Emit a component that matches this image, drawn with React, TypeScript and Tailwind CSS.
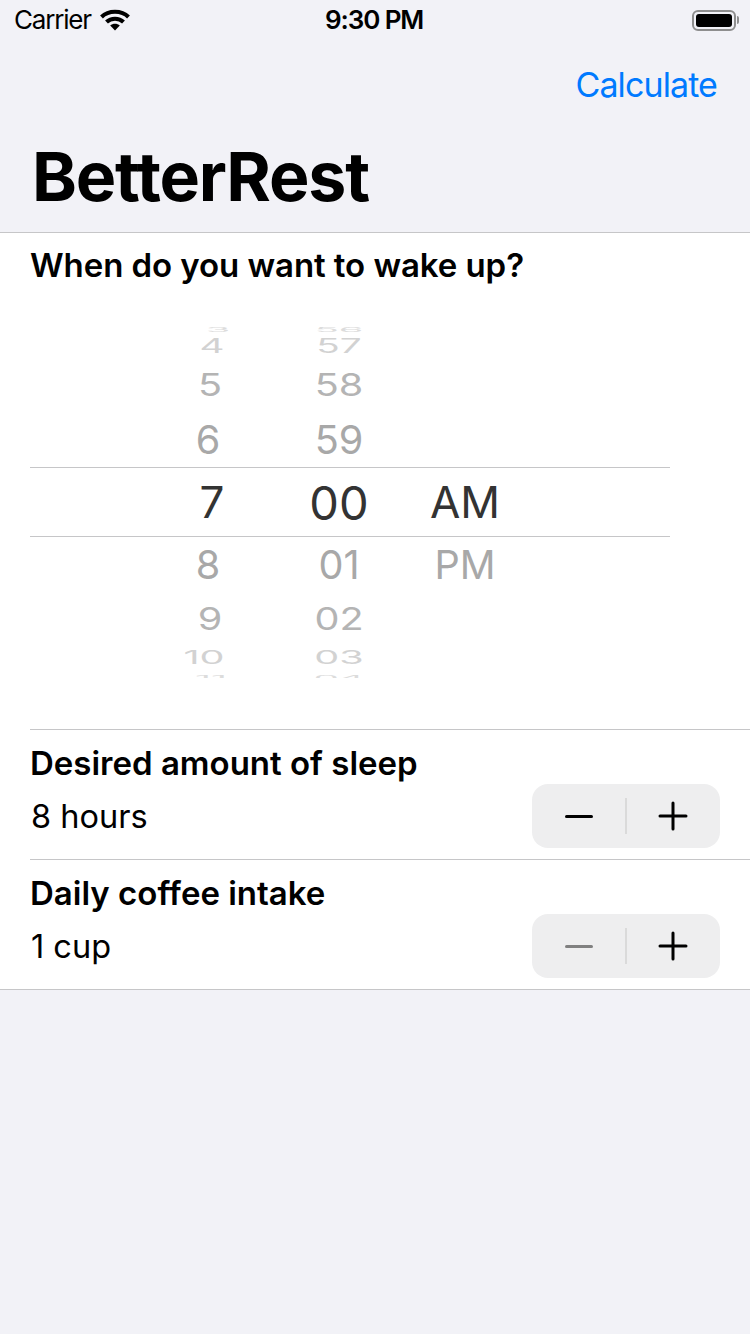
const font = { fontFamily: "Inter, 'Liberation Sans', sans-serif" };

const wheelRows = [
  { h: "h-[9px]", hourBox: "ml-[174px] w-[28px]", hour: "3", minute: "56", ampm: "", text: "text-[#dcdcdc]", scale: "scale-x-[0.9] scale-y-[0.14]" },
  { h: "h-[24px]", hourBox: "ml-[162px] w-[40px]", hour: "4", minute: "57", ampm: "", text: "text-[#d2d2d2]", scale: "scale-x-[0.88] scale-y-[0.44]" },
  { h: "h-[54px]", hourBox: "ml-[158px] w-[44px]", hour: "5", minute: "58", ampm: "", text: "text-[#b4b4b4]", scale: "scale-x-[0.9] scale-y-[0.7]" },
  { h: "h-[55px]", hourBox: "ml-[154px] w-[48px]", hour: "6", minute: "59", ampm: "", text: "text-[#a8a8a8]", scale: "scale-x-[0.9] scale-y-[0.9]" },
  { h: "h-[70px]", hourBox: "ml-[162px] w-[40px]", hour: "7", minute: "00", ampm: "AM", text: "text-[#333333]", scale: "scale-100", selected: true },
  { h: "h-[55px]", hourBox: "ml-[154px] w-[48px]", hour: "8", minute: "01", ampm: "PM", text: "text-[#a8a8a8]", scale: "scale-x-[0.9] scale-y-[0.9]" },
  { h: "h-[54px]", hourBox: "ml-[158px] w-[44px]", hour: "9", minute: "02", ampm: "", text: "text-[#b4b4b4]", scale: "scale-x-[0.9] scale-y-[0.7]" },
  { h: "h-[22px]", hourBox: "ml-[146px] w-[56px]", hour: "10", minute: "03", ampm: "", text: "text-[#d2d2d2]", scale: "scale-x-[0.9] scale-y-[0.42]" },
  { h: "h-[10px] pt-[10px]", hourBox: "ml-[160px] w-[42px]", hour: "11", minute: "04", ampm: "", text: "text-[#dcdcdc]", scale: "scale-x-[0.9] scale-y-[0.14]" },
];

function Stepper({ minusOff }: { minusOff?: boolean }) {
  return (
    <div className="flex h-16 w-[188px] items-center rounded-2xl bg-[#eeeeef] pl-px">
      <div className="flex flex-1 justify-center">
        <div className={`h-[3px] w-7 rounded-full ${minusOff ? "bg-[#808080]" : "bg-black"}`} />
      </div>
      <div className="h-9 w-0.5 bg-[#dadada]" />
      <div className="flex flex-1 justify-center pr-px">
        <svg width="30" height="30" viewBox="0 0 30 30" fill="none" stroke="#000" strokeWidth="3" strokeLinecap="round">
          <path d="M2 15h26M15 2v26" />
        </svg>
      </div>
    </div>
  );
}

function StepRow({ title, value, minusOff }: { title: string; value: string; minusOff?: boolean }) {
  return (
    <div className="ml-[30px] h-[130px] border-t border-[#c6c6c8] pt-[13px] pr-[30px]">
      <div className="text-[33px] leading-10 font-semibold text-black">{title}</div>
      <div className="mt-px flex h-16 items-center justify-between">
        <span className="pt-0.5 pl-px text-[32.5px] text-black">{value}</span>
        <Stepper minusOff={minusOff} />
      </div>
    </div>
  );
}

export default function App() {
  return (
    <div style={font} className="flex h-[1334px] w-[750px] flex-col overflow-hidden bg-[#f2f2f7]">
      {/* status bar */}
      <div className="relative flex h-10 shrink-0 items-center justify-between pr-[11px] pl-[14px]">
        <div className="flex items-center gap-[9px]">
          <span className="text-[26px] leading-none tracking-[-1.2px] text-black">Carrier</span>
          <svg width="30" height="22" viewBox="0 0 30 22" fill="none" stroke="#000" strokeWidth="4">
            <path d="M1.5 8C8.5 1 21.5 1 28.5 8" />
            <path d="M6.5 13C11 8.5 19 8.5 23.5 13" />
            <path d="M15 21.5l-4.8-5c2.6-2.4 7-2.4 9.6 0z" fill="#000" stroke="none" />
          </svg>
        </div>
        <span className="absolute left-[325px] text-[26px] leading-none font-semibold tracking-[-1.1px] text-black">9:30 PM</span>
        <div className="flex items-center">
          <div className="flex h-[21px] w-[44px] items-center justify-center rounded-[6px] border-2 border-[#8e8e8e]">
            <div className="h-[13px] w-[36px] rounded-[3px] bg-black" />
          </div>
          <div className="ml-px h-2 w-0.5 rounded-r bg-[#8e8e8e]" />
        </div>
      </div>

      {/* nav */}
      <div className="h-[192px] shrink-0 pr-[33px] pl-[32px]">
        <div className="flex h-[88px] items-center justify-end">
          <span className="text-[34px] tracking-[-0.9px] text-[#007aff]">Calculate</span>
        </div>
        <div className="text-[68px] leading-[96px] font-bold tracking-[-1.2px] text-black">BetterRest</div>
      </div>

      {/* form */}
      <div className="border-y border-[#c6c6c8] bg-white">
        <div className="h-[496px]">
          <div className="pt-[12px] pl-[30px] text-[33px] leading-10 font-semibold tracking-[-0.07px] text-black">When do you want to wake up?</div>
          <div className="mt-[40px] ml-[30px] w-[640px]">
            {wheelRows.map((r) => (
              <div
                key={r.hour}
                className={`flex items-center overflow-hidden text-[44px] leading-none ${r.h} ${r.text} ${r.selected ? "border-y border-[#c6c6c8]" : ""}`}
              >
                <div className={`shrink-0 text-center whitespace-nowrap ${r.hourBox} ${r.scale}`}>{r.hour}</div>
                <div className={`ml-[47px] w-[120px] shrink-0 text-center ${r.selected ? "text-[47px]" : ""} ${r.scale}`}>{r.minute}</div>
                <div className={`w-[132px] shrink-0 text-center ${r.scale}`}>{r.ampm}</div>
              </div>
            ))}
          </div>
        </div>
        <StepRow title="Desired amount of sleep" value="8 hours" />
        <StepRow title="Daily coffee intake" value="1 cup" minusOff />
      </div>
    </div>
  );
}
